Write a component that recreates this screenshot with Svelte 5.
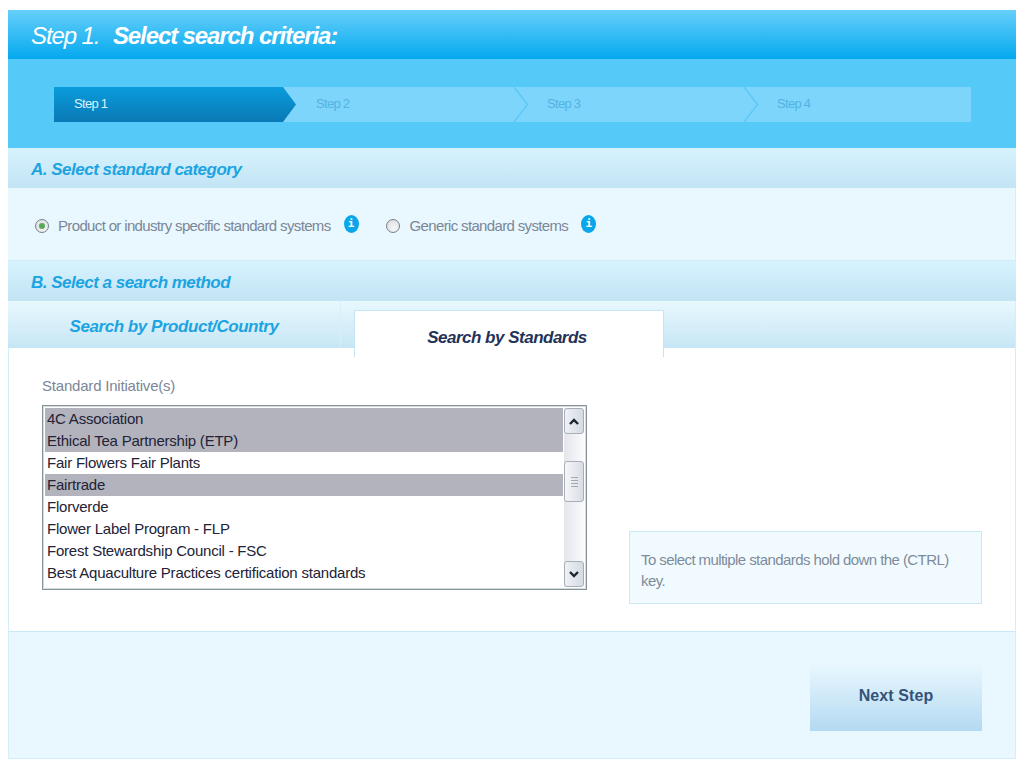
<script lang="ts">
  const steps = ["Step 1", "Step 2", "Step 3", "Step 4"]
  const standards = [
    { name: "4C Association", selected: true },
    { name: "Ethical Tea Partnership (ETP)", selected: true },
    { name: "Fair Flowers Fair Plants", selected: false },
    { name: "Fairtrade", selected: true },
    { name: "Florverde", selected: false },
    { name: "Flower Label Program - FLP", selected: false },
    { name: "Forest Stewardship Council - FSC", selected: false },
    { name: "Best Aquaculture Practices certification standards", selected: false },
  ]
</script>

<div class="page">
  <div class="panel">
    <header class="title">
      <h1>Step 1. <b>Select search criteria:</b></h1>
    </header>

    <div class="stepbar">
      <ol class="steps">
        {#each steps as step, i (step)}
          <li class="step" class:active={i === 0}>
            <span>{step}</span>
            {#if i > 0 && i < 3}
              <svg class="chevron" width="16" height="35" viewBox="0 0 16 35">
                <path d="M1 0 L14.5 17.5 L1 35" fill="none" stroke="#5cc8f6" stroke-width="1.5" />
              </svg>
            {/if}
          </li>
        {/each}
      </ol>
    </div>

    <h2 class="section">A. Select standard category</h2>
    <div class="options">
      <label class="option">
        <span class="radio checked"></span>
        <span class="text">Product or industry specific standard systems</span>
        <span class="info">i</span>
      </label>
      <label class="option">
        <span class="radio"></span>
        <span class="text">Generic standard systems</span>
        <span class="info">i</span>
      </label>
    </div>

    <h2 class="section">B. Select a search method</h2>
    <div class="tabs">
      <div class="tab">Search by Product/Country</div>
      <div class="tab current">Search by Standards</div>
    </div>

    <div class="body">
      <div class="field">
        <div class="label">Standard Initiative(s)</div>
        <div class="listbox">
          <div class="items">
            {#each standards as item (item.name)}
              <div class="item" class:selected={item.selected}>{item.name}</div>
            {/each}
          </div>
          <div class="scrollbar">
            <div class="sb-btn">
              <svg width="10" height="7" viewBox="0 0 10 7"><path d="M1 6 L5 2 L9 6" fill="none" stroke="#1d2530" stroke-width="2.4" /></svg>
            </div>
            <div class="sb-track">
              <div class="sb-thumb"><i></i><i></i><i></i><i></i></div>
            </div>
            <div class="sb-btn">
              <svg width="10" height="7" viewBox="0 0 10 7"><path d="M1 1 L5 5 L9 1" fill="none" stroke="#1d2530" stroke-width="2.4" /></svg>
            </div>
          </div>
        </div>
      </div>
      <div class="hint">To select multiple standards hold down the (CTRL) key.</div>
    </div>

    <div class="footer">
      <button class="next">Next Step</button>
    </div>
  </div>
</div>

<style>
  :global(body) {
    margin: 0;
    background: #fff;
  }
  .page {
    width: 1024px;
    height: 768px;
    padding: 10px 8px 0;
    box-sizing: border-box;
    font-family: "Liberation Sans", Arial, sans-serif;
  }
  .panel {
    width: 1008px;
  }
  .title {
    height: 49px;
    background: linear-gradient(#66cffa, #04a9ef);
    padding-left: 23px;
    display: flex;
    align-items: center;
  }
  h1 {
    margin: 3px 0 0;
    font-size: 24px;
    font-weight: normal;
    font-style: italic;
    color: #fff;
    letter-spacing: -1.1px;
  }
  h1 b {
    margin-left: 8px;
  }
  .stepbar {
    height: 89px;
    background: #55caf8;
    padding: 28px 45px 0 46px;
    box-sizing: border-box;
  }
  .steps {
    display: flex;
    list-style: none;
    margin: 0;
    padding: 0;
    height: 35px;
    background: #7dd5fb;
  }
  .step {
    position: relative;
    width: 230px;
    box-sizing: border-box;
    padding-left: 33px;
    line-height: 34px;
    font-size: 13px;
    letter-spacing: -0.7px;
    color: #52b3e3;
  }
  .step.active {
    width: 242px;
    margin-right: -12px;
    padding-left: 20px;
    color: #d9f2fd;
    background: linear-gradient(#0a9cdd, #0979b4);
    clip-path: polygon(0 0, 229px 0, 100% 50%, 229px 100%, 0 100%);
  }
  .step:nth-child(2) {
    padding-left: 32px;
  }
  .step:last-child {
    width: 227px;
  }
  .chevron {
    position: absolute;
    top: 0;
    right: -15px;
  }
  .section {
    margin: 0;
    height: 40px;
    line-height: 43px;
    padding-left: 23px;
    background: linear-gradient(#d6f2fe, #c3e4f4);
    font-size: 17px;
    font-style: italic;
    font-weight: bold;
    color: #1ca4e2;
    letter-spacing: -0.5px;
  }
  .options {
    height: 73px;
    box-sizing: border-box;
    background: #e9f8fe;
    display: flex;
    gap: 27px;
    padding: 28px 0 0 27px;
    border-bottom: 1px solid #d3eef9;
    border-right: 1px solid #d3eef9;
  }
  .option {
    display: flex;
    align-items: flex-start;
    height: 20px;
  }
  .radio {
    width: 14px;
    height: 14px;
    margin-top: 3px;
    box-sizing: border-box;
    border: 1.5px solid #76818f;
    border-radius: 50%;
    background: radial-gradient(circle at 60% 65%, #f6f8f8, #d5d8da);
    display: flex;
    align-items: center;
    justify-content: center;
  }
  .radio.checked::after {
    content: "";
    width: 6px;
    height: 6px;
    border-radius: 50%;
    background: #58a85c;
  }
  .text {
    margin: 0 0 0 9px;
    font-size: 15px;
    line-height: 19px;
    color: #7b8698;
    letter-spacing: -0.65px;
  }
  .option + .option .text {
    margin-left: 10px;
  }
  .info {
    width: 15px;
    height: 18px;
    margin: -1px 0 0 13px;
    border-radius: 50%;
    background: #0aa6ea;
    color: #fff;
    font: bold 11px/18px "DejaVu Sans Mono", monospace;
    text-align: center;
  }
  .tabs {
    height: 47px;
    display: flex;
    background: linear-gradient(#e9f8fe, #c6e6f5);
    border-right: 1px solid #d3eef9;
    box-sizing: border-box;
  }
  .tab {
    width: 333px;
    box-sizing: border-box;
    border-right: 1px solid #d6eef8;
    text-align: center;
    padding: 16px 0 0 0;
    font-size: 17px;
    font-weight: bold;
    font-style: italic;
    color: #1ca4e2;
    letter-spacing: -0.45px;
  }
  .tab.current {
    width: 310px;
    height: 47px;
    margin: 9px 0 0 13px;
    padding: 17px 4px 0 0;
    background: #fff;
    border: 1px solid #c5e5f3;
    border-bottom: 0;
    color: #1f3358;
    letter-spacing: -0.5px;
  }
  .body {
    height: 283px;
    box-sizing: border-box;
    background: #fff;
    border-left: 1px solid #d3eef9;
    border-right: 1px solid #d3eef9;
    display: flex;
    padding: 29px 0 0 33px;
  }
  .label {
    font-size: 15px;
    line-height: 17px;
    color: #7b8698;
    letter-spacing: -0.2px;
    margin-bottom: 11px;
  }
  .listbox {
    width: 545px;
    height: 185px;
    box-sizing: border-box;
    border: 1px solid #87939b;
    box-shadow: inset 0 0 0 1px #d5dadd;
    padding: 2px;
    display: flex;
    background: #fff;
  }
  .items {
    width: 518px;
    flex: none;
  }
  .item {
    height: 22px;
    line-height: 22px;
    padding-left: 2px;
    font-size: 15px;
    color: #232236;
    white-space: nowrap;
    letter-spacing: -0.22px;
  }
  .item.selected {
    background: #b2b3bd;
  }
  .scrollbar {
    width: 20px;
    margin-left: 1px;
    display: flex;
    flex-direction: column;
    background: linear-gradient(90deg, #e4e6eb, #fbfbfd);
  }
  .sb-btn {
    height: 26px;
    box-sizing: border-box;
    border: 1px solid #a6afb8;
    border-radius: 3px;
    background: linear-gradient(90deg, #eef1f5, #d5dbe2);
    display: flex;
    align-items: center;
    justify-content: center;
  }
  .sb-track {
    flex: 1;
    padding-top: 27px;
  }
  .sb-thumb {
    height: 41px;
    box-sizing: border-box;
    border: 1px solid #a6afb8;
    border-radius: 3px;
    background: linear-gradient(90deg, #f5f6f9, #d9dde4);
    display: flex;
    flex-direction: column;
    align-items: center;
    justify-content: center;
    gap: 2px;
  }
  .sb-thumb i {
    display: block;
    width: 7px;
    height: 1px;
    background: #a3a9b2;
  }
  .hint {
    width: 353px;
    height: 73px;
    margin: 154px 0 0 42px;
    box-sizing: border-box;
    border: 1px solid #c9e9f5;
    background: #f1fbff;
    padding: 17px 22px 0 11px;
    font-size: 15px;
    line-height: 21px;
    color: #7f8b9b;
    letter-spacing: -0.58px;
  }
  .footer {
    height: 128px;
    box-sizing: border-box;
    background: #e9f8fe;
    border: 1px solid #d3eef9;
    border-top-color: #c9e9f5;
    padding: 32px 33px 0 0;
    display: flex;
    justify-content: flex-end;
  }
  .next {
    width: 172px;
    height: 67px;
    border: 0;
    padding: 0 0 4px;
    background: linear-gradient(#e9f8fe, #b4d9f2);
    font-family: inherit;
    font-size: 16px;
    font-weight: bold;
    color: #34537a;
    letter-spacing: 0.1px;
  }
</style>
